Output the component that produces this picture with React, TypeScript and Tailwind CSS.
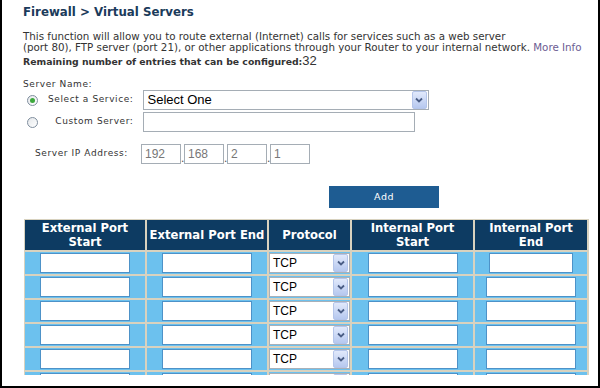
import { FC, ReactNode } from "react";

const Arrow: FC = () => (
  <span className="flex h-full w-[15px] items-center justify-center rounded-[2px] border border-[#b4c5ea] bg-linear-to-b from-[#e1e9fb] to-[#b6c8ef]">
    <svg width="8" height="6" viewBox="0 0 8 6">
      <polyline points="1,1.5 4,4.5 7,1.5" fill="none" stroke="#4a5d85" strokeWidth="1.8" />
    </svg>
  </span>
);

const Radio: FC<{ checked?: boolean }> = ({ checked }) => (
  <span className="flex h-[11px] w-[11px] items-center justify-center rounded-full border border-[#7f8e9e] bg-linear-to-br from-[#e4e7ea] to-white">
    {checked && <span className="h-[5px] w-[5px] rounded-full bg-[#3ca83c]" />}
  </span>
);

const cols: ReactNode[] = [
  <>External Port<br />Start</>,
  "External Port End",
  "Protocol",
  <>Internal Port<br />Start</>,
  <>Internal Port<br />End</>,
];

const App: FC = () => {
  return (
    <div className="h-[388px] w-[600px] overflow-hidden border-r-2 border-b-2 border-l-2 border-black bg-white font-['DejaVu_Sans',sans-serif] text-[#333]">
      <div className="pl-[21px]">
        <h1 className="h-[24px] text-[11.8px] leading-[24px] font-bold text-[#1b3b5b]">
          Firewall &gt; Virtual Servers
        </h1>
        <p className="mt-[6.5px] text-[10.3px] leading-[11px]">
          This function will allow you to route external (Internet) calls for services such as a web server
          <br />
          (port 80), FTP server (port 21), or other applications through your Router to your internal network.{" "}
          <span className="text-[#6c5c92]">More Info</span>
        </p>
        <p className="mt-[1.5px] h-[14px] text-[9.3px] leading-[14px] font-bold">
          Remaining number of entries that can be configured:
          <span className="font-['Liberation_Sans',sans-serif] text-[13px] font-normal">32</span>
        </p>

        <div className="mt-[11px] h-[11px] text-[9px] leading-[11px] tracking-[0.6px]">Server Name:</div>

        <div className="flex h-[20px] items-center">
          <span className="ml-[3.5px]">
            <Radio checked />
          </span>
          <span className="w-[96px] text-right text-[9px] tracking-[0.6px]">Select a Service:</span>
          <div className="ml-[9px] flex h-[20px] w-[286px] items-center border border-[#a5adb5] bg-white pr-[1px]">
            <span className="flex-1 pl-[4px] font-['Liberation_Sans',sans-serif] text-[13px] text-black">Select One</span>
            <span className="h-[18px]">
              <Arrow />
            </span>
          </div>
        </div>

        <div className="mt-[2px] flex h-[20px] items-center">
          <span className="ml-[3.5px]">
            <Radio />
          </span>
          <span className="w-[96px] text-right text-[9px] tracking-[0.6px]">Custom Server:</span>
          <input className="ml-[9px] h-[20px] w-[272px] border border-[#a5adb5] bg-white outline-none" />
        </div>

        <div className="mt-[12px] flex h-[20px] items-end">
          <span className="mb-[4px] w-[105px] text-right text-[9px] tracking-[0.6px]">Server IP Address:</span>
          <div className="ml-[13px] flex items-end font-['Liberation_Sans',sans-serif] text-[12px] text-[#777]">
            {["192", "168", "2", "1"].map((v, i) => (
              <div key={i} className="flex items-end">
                {i > 0 && <span className="w-[3px] text-center leading-[12px] text-[#555]">.</span>}
                <div className="flex h-[20px] w-[40px] items-center border border-[#a5adb5] bg-white pl-[3px]">
                  {v}
                </div>
              </div>
            ))}
          </div>
        </div>

        <div className="mt-[22px] ml-[306px] flex h-[22px] w-[110px] items-center justify-center bg-[#1e5c92] text-[9.5px] tracking-[0.5px] text-white">
          Add
        </div>

        <div className="mt-[11px] ml-[1px] h-[156px] w-[565px] overflow-hidden">
          <div className="grid grid-cols-[120px_120px_81px_121px_112px] gap-[2px] bg-[#d8d2bf] p-[1px]">
            {cols.map((c, i) => (
              <div
                key={i}
                className="flex h-[30px] items-center justify-center bg-[#0d3b62] text-center text-[11.6px] leading-[14px] font-bold whitespace-nowrap text-white"
              >
                <span>{c}</span>
              </div>
            ))}
            {[0, 1, 2, 3, 4, 5].map((r) =>
              [0, 1, 2, 3, 4].map((c) => (
                <div key={`${r}-${c}`} className="flex h-[22px] items-start justify-center bg-[#6cc1ee] pt-[1px]">
                  {c === 2 ? (
                    <div className="flex h-[20px] w-[81px] items-center border border-[#a9b0b8] bg-white pr-[1px]">
                      <span className="flex-1 pl-[3px] font-['Liberation_Sans',sans-serif] text-[12px] text-black">
                        {r < 5 ? "TCP" : ""}
                      </span>
                      <span className="h-[18px]">
                        <Arrow />
                      </span>
                    </div>
                  ) : (
                    <input
                      className={`h-[20px] border border-[#4d92c8] bg-white outline-none ${
                        c === 4 && r === 0 ? "w-[84px]" : "w-[90px]"
                      }`}
                    />
                  )}
                </div>
              ))
            )}
          </div>
        </div>
      </div>
    </div>
  );
};

export default App;
